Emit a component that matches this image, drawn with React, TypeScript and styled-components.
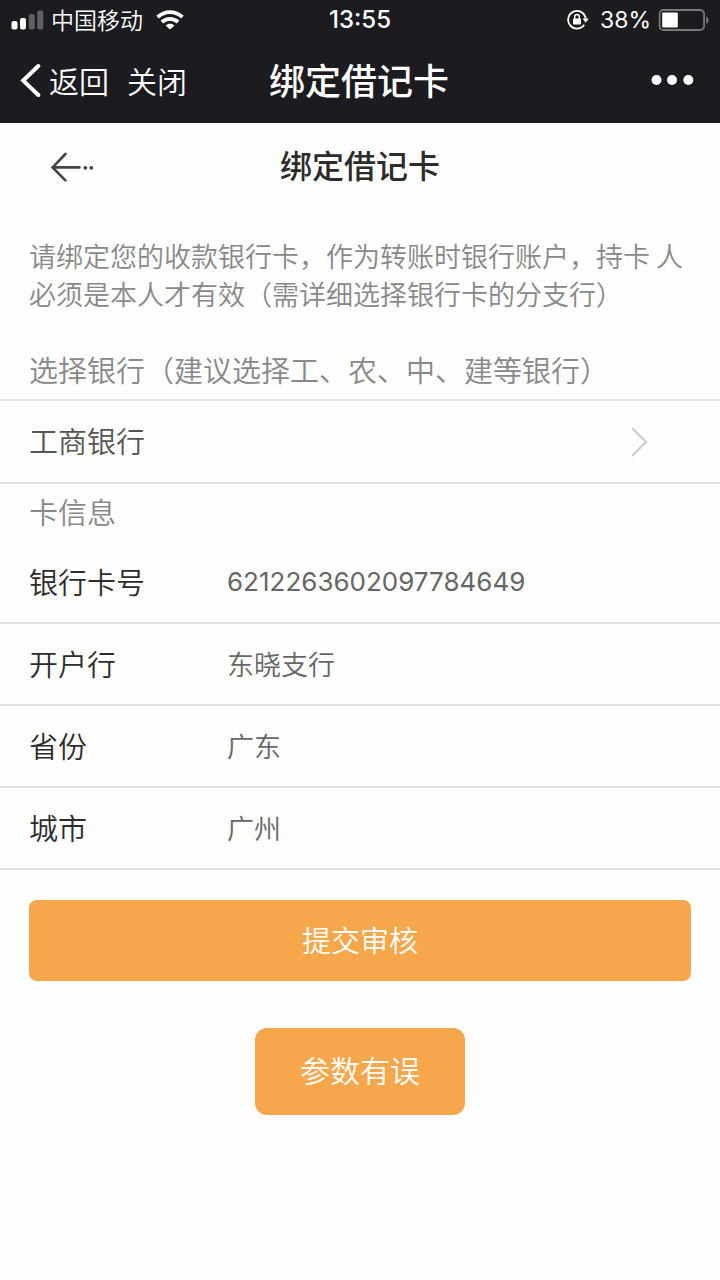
import React from "react";
import styled, { createGlobalStyle } from "styled-components";

const cjk = '"Noto Sans CJK SC", sans-serif';
const latin = 'Inter, "Noto Sans CJK SC", sans-serif';

const GlobalStyle = createGlobalStyle`
  *, *::before, *::after { box-sizing: border-box; }
  body {
    margin: 0;
    background: #fefefe;
    color: #2c2c2c;
    font-family: ${cjk};
    font-weight: 350;
  }
  button, input, select { font: inherit; }
`;

const Page = styled.div`
  min-height: 100vh;
`;

const TopArea = styled.header`
  background: #1c1b20;
  color: #fff;
`;

const StatusBar = styled.div`
  display: grid;
  grid-template-columns: 1fr auto 1fr;
  align-items: center;
  height: 40px;
  padding: 0 11px;
`;

const StatusGroup = styled.div<{ $end?: boolean }>`
  display: flex;
  align-items: center;
  justify-content: ${(p) => (p.$end ? "flex-end" : "flex-start")};
  gap: 7px;
`;

const Carrier = styled.span`
  margin-right: 6px;
  padding-bottom: 3px;
  font-size: 23px;
  line-height: 32px;
`;

const Clock = styled.time`
  font-family: ${latin};
  font-size: 24px;
  line-height: 32px;
  font-weight: 500;
`;

const BatteryLevel = styled.span`
  margin-left: 4px;
  font-family: ${latin};
  font-size: 23px;
  font-weight: 400;
  line-height: 32px;
`;

const NavBar = styled.nav`
  display: grid;
  grid-template-columns: 1fr auto 1fr;
  align-items: center;
  height: 83px;
  padding: 0 22px 3px 20px;
`;

const NavActions = styled.div`
  display: flex;
  align-items: center;
  gap: 18px;
`;

const NavButton = styled.button<{ $end?: boolean }>`
  display: flex;
  align-items: center;
  gap: 7px;
  justify-self: ${(p) => (p.$end ? "end" : "start")};
  padding: 0;
  border: 0;
  background: none;
  color: inherit;
  font-size: 30px;
  line-height: 40px;
  cursor: pointer;
`;

const NavTitle = styled.div`
  padding-bottom: 2px;
  font-size: 36px;
  line-height: 48px;
  font-weight: 500;
`;

const PageHeader = styled.div`
  display: grid;
  grid-template-columns: 1fr auto 1fr;
  align-items: center;
  height: 86px;
  padding: 0 48px;
`;

const BackLink = styled.a`
  display: flex;
  color: #444;
`;

const PageTitle = styled.h1`
  margin: 0;
  padding-bottom: 4px;
  font-size: 32px;
  line-height: 44px;
  font-weight: 500;
`;

const Intro = styled.p`
  margin: 28px 0 0;
  padding: 0 29px;
  color: #888;
  font-size: 27px;
  line-height: 38px;
`;

const SectionLabel = styled.label`
  display: block;
  margin-top: 28px;
  padding: 0 29px 2px;
  color: #888;
  font-size: 29px;
  line-height: 56px;
`;

const SectionTitle = styled.h2`
  margin: 0;
  padding: 0 29px 4px;
  color: #888;
  font-size: 29px;
  font-weight: inherit;
  line-height: 54px;
`;

const BankRow = styled.div`
  display: grid;
  align-items: center;
  height: 85px;
  border-top: 2px solid #e2e2e2;
  border-bottom: 2px solid #e2e2e2;

  > * { grid-area: 1 / 1; }

  > svg {
    justify-self: end;
    margin-right: 72px;
    pointer-events: none;
  }
`;

const BankSelect = styled.select`
  width: 100%;
  height: 80px;
  padding: 0 29px 4px;
  border: 0;
  outline: 0;
  appearance: none;
  background: transparent;
  color: #555;
  font-size: 29px;
`;

const Field = styled.div`
  display: flex;
  align-items: center;
  height: 82px;
  padding: 0 29px 2px;
  border-bottom: 2px solid #e2e2e2;
`;

const FieldLabel = styled.label`
  flex: 0 0 198px;
  font-size: 29px;
  line-height: 40px;
`;

const FieldInput = styled.input`
  flex: 1;
  min-width: 0;
  height: 40px;
  padding: 0;
  border: 0;
  outline: 0;
  background: transparent;
  color: #666;
  font-family: ${latin};
  font-size: 27px;

  &[inputmode="numeric"] {
    font-size: 26px;
    font-weight: 400;
  }
`;

const SubmitArea = styled.div`
  padding: 30px 29px 47px;
`;

const SubmitButton = styled.button`
  display: block;
  width: 100%;
  height: 81px;
  padding: 0 0 3px;
  border: 0;
  border-radius: 8px;
  background: #f6a74c;
  color: #fff;
  font-size: 29px;
  cursor: pointer;
`;

const Toast = styled.div`
  width: fit-content;
  margin: 0 auto;
  padding: 19px 45px 24px;
  border-radius: 12px;
  background: #f6a74c;
  color: #fff;
  font-size: 30px;
  line-height: 44px;
`;

const SignalIcon = () => (
  <svg width="33" height="20" viewBox="0 0 33 20" fill="#fff" aria-hidden="true">
    <rect x="0.5" y="11" width="6" height="8.5" rx="2" />
    <rect x="9" y="8" width="6" height="11.5" rx="2" />
    <rect x="17.8" y="4" width="6" height="15.5" rx="2" opacity="0.3" />
    <rect x="26.3" y="0.5" width="6" height="19" rx="2" opacity="0.3" />
  </svg>
);

const WifiIcon = () => (
  <svg width="28" height="20" viewBox="0 0 28 20" fill="none" stroke="#fff" strokeWidth="3.8" aria-hidden="true">
    <path d="M1.6 7.2C8.6 0.4 19.4 0.4 26.4 7.2" />
    <path d="M5.9 12C10.6 7.7 17.4 7.7 22.1 12" />
    <path d="M9.6 15.5C12.2 13.2 15.8 13.2 18.4 15.5L14 19.6Z" fill="#fff" stroke="none" />
  </svg>
);

const RotationLockIcon = () => (
  <svg width="22" height="20" viewBox="0 0 22 20" fill="none" stroke="#fff" aria-hidden="true">
    <path d="M17.2 14.8A8.8 8.8 0 1 1 18.7 8.6" strokeWidth="1.8" />
    <path d="M15.6 8.6H21.8L18.7 12.8Z" fill="#fff" stroke="none" />
    <rect x="6" y="8.6" width="8" height="6" rx="0.8" fill="#fff" stroke="none" />
    <path d="M7.7 9V6.8a2.3 2.3 0 0 1 4.6 0V9" strokeWidth="1.5" />
  </svg>
);

const BatteryIcon = () => (
  <svg width="51" height="22" viewBox="0 0 51 22" aria-hidden="true">
    <rect x="1.6" y="1" width="44.5" height="20" rx="4" fill="none" stroke="#77767a" strokeWidth="1.8" />
    <rect x="4.2" y="3.6" width="15.6" height="15" rx="1" fill="#fff" />
    <path d="M48.2 7.6C51.4 9 51.4 13.6 48.2 15Z" fill="#77767a" />
  </svg>
);

const ChevronLeftIcon = () => (
  <svg width="22" height="34" viewBox="0 0 22 34" fill="none" stroke="#fff" strokeWidth="4" strokeLinecap="round" aria-hidden="true">
    <path d="M18.3 3L3.2 17.6L18.3 32" />
  </svg>
);

const MoreIcon = () => (
  <svg width="47" height="12" viewBox="0 0 47 12" fill="#fff" aria-hidden="true">
    <circle cx="5.5" cy="6" r="5" />
    <circle cx="21" cy="6" r="5" />
    <circle cx="37.3" cy="6" r="5" />
  </svg>
);

const BackArrowIcon = () => (
  <svg width="48" height="32" viewBox="0 0 48 32" fill="none" stroke="currentColor" strokeWidth="2.6" strokeLinecap="round" aria-hidden="true">
    <path d="M17.4 4L4.6 17.4L17.4 30.4" />
    <path d="M5 17.4H31.4" />
    <circle cx="37.3" cy="17.8" r="1.9" fill="currentColor" stroke="none" />
    <circle cx="43.3" cy="17.8" r="1.9" fill="currentColor" stroke="none" />
  </svg>
);

const ChevronRightIcon = () => (
  <svg width="18" height="30" viewBox="0 0 18 30" fill="none" stroke="#c9c9c9" strokeWidth="2" strokeLinecap="round" aria-hidden="true">
    <path d="M2.6 1.6L16 15L2.6 28.4" />
  </svg>
);

const fields = [
  { id: "card", label: "银行卡号", value: "6212263602097784649", numeric: true },
  { id: "branch", label: "开户行", value: "东晓支行" },
  { id: "province", label: "省份", value: "广东" },
  { id: "city", label: "城市", value: "广州" },
];

export default function App() {
  return (
    <Page>
      <GlobalStyle />
      <TopArea>
        <StatusBar>
          <StatusGroup>
            <SignalIcon />
            <Carrier>中国移动</Carrier>
            <WifiIcon />
          </StatusGroup>
          <Clock>13:55</Clock>
          <StatusGroup $end>
            <RotationLockIcon />
            <BatteryLevel>38%</BatteryLevel>
            <BatteryIcon />
          </StatusGroup>
        </StatusBar>
        <NavBar>
          <NavActions>
            <NavButton type="button">
              <ChevronLeftIcon />
              返回
            </NavButton>
            <NavButton type="button">关闭</NavButton>
          </NavActions>
          <NavTitle>绑定借记卡</NavTitle>
          <NavButton type="button" $end aria-label="更多">
            <MoreIcon />
          </NavButton>
        </NavBar>
      </TopArea>
      <main>
        <PageHeader>
          <BackLink href="#" aria-label="返回">
            <BackArrowIcon />
          </BackLink>
          <PageTitle>绑定借记卡</PageTitle>
        </PageHeader>
        <Intro>
          请绑定您的收款银行卡，作为转账时银行账户，持卡 人必须是本人才有效（需详细选择银行卡的分支行）
        </Intro>
        <form onSubmit={(e) => e.preventDefault()}>
          <SectionLabel htmlFor="bank">选择银行（建议选择工、农、中、建等银行）</SectionLabel>
          <BankRow>
            <BankSelect id="bank" defaultValue="工商银行">
              <option>工商银行</option>
            </BankSelect>
            <ChevronRightIcon />
          </BankRow>
          <SectionTitle>卡信息</SectionTitle>
          {fields.map((f) => (
            <Field key={f.id}>
              <FieldLabel htmlFor={f.id}>{f.label}</FieldLabel>
              <FieldInput
                id={f.id}
                type="text"
                inputMode={f.numeric ? "numeric" : "text"}
                defaultValue={f.value}
              />
            </Field>
          ))}
          <SubmitArea>
            <SubmitButton type="submit">提交审核</SubmitButton>
          </SubmitArea>
        </form>
        <Toast role="alert">参数有误</Toast>
      </main>
    </Page>
  );
}
